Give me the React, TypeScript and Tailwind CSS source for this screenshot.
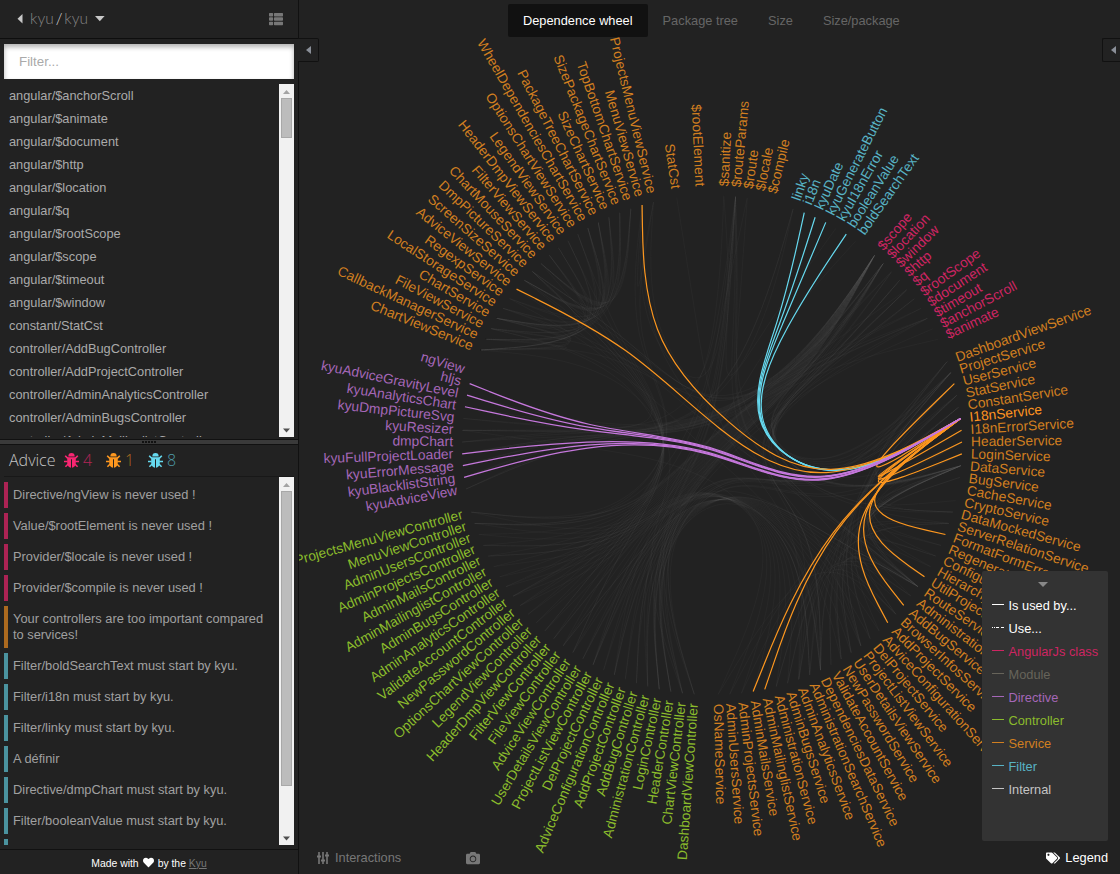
import React from "react";
import { FaCamera, FaHeart, FaTags, FaThList } from "react-icons/fa";

type Kind = "service" | "filter" | "angular" | "controller" | "directive";

const COLORS: Record<Kind, string> = {
  service: "#fd971f",
  filter: "#66d9ef",
  angular: "#f92672",
  controller: "#a6e22e",
  directive: "#c678dd",
};

const LABEL_COLORS: Record<Kind, string> = {
  service: "#d17f20",
  filter: "#58b3c5",
  angular: "#ce2562",
  controller: "#8bbc2c",
  directive: "#a567b8",
};

interface Group {
  kind: Kind;
  names: string[];
}

const GROUPS: Group[] = [
  { kind: "service", names: ["$sanitize", "$routeParams", "$route", "$locale", "$compile"] },
  {
    kind: "filter",
    names: ["linky", "i18n", "kyuDate", "kyuGenerateButton", "kyuI18nError", "booleanValue", "boldSearchText"],
  },
  {
    kind: "angular",
    names: ["$scope", "$location", "$window", "$http", "$q", "$rootScope", "$document", "$timeout", "$anchorScroll", "$animate"],
  },
  {
    kind: "service",
    names: [
      "DashboardViewService", "ProjectService", "UserService", "StatService", "ConstantService", "I18nService",
      "I18nErrorService", "HeaderService", "LoginService", "DataService", "BugService", "CacheService",
      "CryptoService", "DataMockedService", "ServerRelationService", "FormatFormErrorService",
      "RegenerateService", "ConfigurationService", "HierarchyService", "UtilProjectService", "RouteService",
      "AdministrationViewService", "AddBugService", "BrowserInfosService", "AddProjectService",
      "AdviceConfigurationService", "DelProjectService", "ProjectListViewService", "UserDetailsViewService",
      "NewPasswordService", "ValidateAccountService", "DependenciesDataService", "AdministrationSearchService",
      "AdminAnalyticsService", "AdminBugsService", "AdministrationService", "AdminMailinglistService",
      "AdminMailsService", "AdminProjectsService", "AdminUsersService", "OsNameService",
    ],
  },
  {
    kind: "controller",
    names: [
      "DashboardViewController", "ChartViewController", "HeaderController", "LoginController",
      "AdministrationController", "AddBugController", "AddProjectController", "AdviceConfigurationController",
      "DelProjectController", "ProjectListViewController", "UserDetailsViewController", "AdviceViewController",
      "FileViewController", "FilterViewController", "HeaderDmpViewController", "LegendViewController",
      "OptionsChartViewController", "NewPasswordController", "ValidateAccountController",
      "AdminAnalyticsController", "AdminBugsController", "AdminMailinglistController", "AdminMailsController",
      "AdminProjectsController", "AdminUsersController", "MenuViewController", "ProjectsMenuViewController",
    ],
  },
  {
    kind: "directive",
    names: [
      "kyuAdviceView", "kyuBlacklistString", "kyuErrorMessage", "kyuFullProjectLoader", "dmpChart", "kyuResizer",
      "kyuDmpPictureSvg", "kyuAnalyticsChart", "kyuAdviceGravityLevel", "hljs", "ngView",
    ],
  },
  {
    kind: "service",
    names: [
      "ChartViewService", "CallbackManagerService", "FileViewService", "ChartService", "LocalStorageService",
      "RegexpService", "AdviceViewService", "ScreenSizeService", "DmpPictureService", "ChartMouseService",
      "FilterViewService", "HeaderDmpViewService", "LegendViewService", "OptionsChartViewService",
      "WheelDependenciesChartService", "PackageTreeChartService", "SizeChartService",
      "SizePackageChartService", "TopBottomChartService", "MenuViewService", "ProjectsMenuViewService",
    ],
  },
  { kind: "service", names: ["StatCst"] },
  { kind: "service", names: ["$rootElement"] },
];

const CX = 712;
const CY = 445;
const RADIUS = 250;
const TENSION = 0.85;

type Point = [number, number];

interface Leaf {
  name: string;
  kind: Kind;
  group: number;
  slot: number;
  angle: number;
}

const SLOTS = GROUPS.reduce((n, g) => n + g.names.length + 1, 0);
const STEP = 360 / SLOTS;

const leaves: Leaf[] = [];
const groupPoints: Point[] = [];

function polar(angle: number, r: number): Point {
  const a = (angle * Math.PI) / 180;
  return [r * Math.sin(a), -r * Math.cos(a)];
}

let cursor = 1;
GROUPS.forEach((g, gi) => {
  const first = cursor;
  g.names.forEach((name) => {
    leaves.push({ name, kind: g.kind, group: gi, slot: cursor, angle: cursor * STEP });
    cursor += 1;
  });
  groupPoints.push(polar(((first + cursor - 1) / 2) * STEP, RADIUS / 2));
  cursor += 1;
});

const bySlot = new Map<number, Leaf>(leaves.map((l) => [l.slot, l]));

function bundlePath(a: Leaf, b: Leaf): string {
  const start = polar(a.angle, RADIUS);
  const end = polar(b.angle, RADIUS);
  const raw: Point[] =
    a.group === b.group
      ? [start, groupPoints[a.group], end]
      : [start, groupPoints[a.group], [0, 0], groupPoints[b.group], end];
  const n = raw.length - 1;
  const pts = raw.map((p, i): Point => {
    const t = i / n;
    return [
      TENSION * p[0] + (1 - TENSION) * (start[0] + t * (end[0] - start[0])),
      TENSION * p[1] + (1 - TENSION) * (start[1] + t * (end[1] - start[1])),
    ];
  });
  const seq = [pts[0], pts[0], ...pts, pts[n]];
  let d = "M" + start[0].toFixed(2) + "," + start[1].toFixed(2);
  for (let i = 0; i + 3 < seq.length; i++) {
    const [p, q, r, s] = [seq[i], seq[i + 1], seq[i + 2], seq[i + 3]];
    const mix = (k: number) => [
      (2 * q[k] + r[k]) / 3,
      (q[k] + 2 * r[k]) / 3,
      (q[k] + 4 * r[k] + s[k]) / 6,
      (p[k] + 4 * q[k] + r[k]) / 6,
    ];
    const x = mix(0);
    const y = mix(1);
    if (i === 0) d += "L" + x[3].toFixed(2) + "," + y[3].toFixed(2);
    d += `C${x[0].toFixed(2)},${y[0].toFixed(2)} ${x[1].toFixed(2)},${y[1].toFixed(2)} ${x[2].toFixed(2)},${y[2].toFixed(2)}`;
  }
  return d + "L" + end[0].toFixed(2) + "," + end[1].toFixed(2);
}

function range(from: number, to: number): number[] {
  return Array.from({ length: to - from + 1 }, (_, i) => from + i);
}

const mutedLinks: [number, number][] = [];
const connect = (a: number, list: number[]) => list.forEach((b) => mutedLinks.push([a, b]));

// Angular classes
connect(15, [...range(68, 94), 96, 97, 98, 99, 100, 101, 102, 103, 104]);
connect(16, [68, 70, 71, 73, 77, 93, 94, 46, 27, 28, 29, 33, 96, 99]);
connect(17, [35, 49, 115, 101]);
connect(18, [35, 39, 40, 57]);
connect(19, [35, 39, 57, 59, 110]);
connect(20, [35, 46, 71]);
connect(21, [101, 116]);
connect(22, [35, 57, 99, 101, 116]);
connect(23, [70]);
connect(24, [100]);
// Routing and sanitising
connect(1, [7, 100]);
connect(2, [68, 69, 72, 75, 77, 86, 46, 27, 53, 108, 127]);
connect(3, [46, 93]);
connect(7, [96, 97]);
connect(11, [98]);
connect(13, [81]);
// Controllers and their services
connect(26, [68, 46, 35, 27, 53]);
connect(27, [72, 75, 77, 50, 52, 53, 35, 45]);
connect(28, [71, 78, 54, 55, 56]);
connect(29, [69, 57, 35, 46, 59]);
connect(30, [35, 39, 43, 44, 45]);
connect(33, [70, 46]);
connect(34, [71, 46]);
connect(35, [38, 39, 42, 45, 48, 50, 51, 52, 54, 55, 56, 59, 60, 61, 64, 65]);
connect(46, [48, 50, 53, 54, 55, 61, 70, 71, 85]);
connect(40, [42, 45, 57, 58]);
connect(43, [44, 45]);
connect(47, [60, 36]);
connect(49, [36, 58]);
range(0, 8).forEach((i) => mutedLinks.push([72 + i, 47 + i]));
range(0, 8).forEach((i) => mutedLinks.push([86 + i, 57 + i]));
connect(58, [90, 91]);
connect(66, [49, 101]);
connect(57, [69, 80, 110]);
// Chart view services
connect(108, [69, 109, 111, 122, 123, 124, 125, 126]);
connect(109, [111, 116, 118, 120, 121]);
connect(110, [80, 111, 119, 120]);
connect(111, [122, 123, 124, 125, 126, 118]);
connect(112, [35, 108, 121, 119]);
connect(113, [118, 123, 79]);
connect(115, [111, 122, 123, 124, 125, 126]);
connect(116, [122, 102, 82]);
connect(117, [122, 123, 124, 125, 126]);
range(114, 121).forEach((s) => mutedLinks.push([s, s - 35 + (s % 3)]));
connect(127, [93, 46]);
connect(128, [94, 127, 27]);
connect(130, [59]);

const I18N_SLOT = 31;
const activeSlots = [
  8, 9, 10, 12, 28, 32, 33, 34, 41, 45, 48, 50, 62, 63, 114, 127, 97, 98, 99, 103, 104, 105,
];

function DependenceWheel() {
  const source = bySlot.get(I18N_SLOT)!;
  return (
    <svg className="absolute inset-0" width="821" height="874" viewBox="299 0 821 874">
      <g transform={`translate(${CX},${CY})`}>
        <g fill="none" stroke="#666" strokeOpacity="0.09" strokeWidth="1">
          {mutedLinks.map(([a, b], i) => (
            <path key={i} d={bundlePath(bySlot.get(a)!, bySlot.get(b)!)} />
          ))}
        </g>
        <g fill="none" strokeWidth="1.2">
          {activeSlots.map((s) => {
            const leaf = bySlot.get(s)!;
            return <path key={s} d={bundlePath(leaf, source)} stroke={COLORS[leaf.kind]} />;
          })}
        </g>
        <g fontFamily="Liberation Sans, Arial, sans-serif" fontSize="13.8">
          {leaves.map((l) => {
            const flipped = l.angle >= 180;
            return (
              <text
                key={l.slot}
                dy=".31em"
                textAnchor={flipped ? "end" : "start"}
                fill={l.slot === I18N_SLOT ? "#ff9420" : LABEL_COLORS[l.kind]}
                transform={`rotate(${l.angle - 90})translate(${RADIUS + 9},0)${flipped ? "rotate(180)" : ""}`}
              >
                {l.name}
              </text>
            );
          })}
        </g>
      </g>
    </svg>
  );
}

const FILES = [
  "angular/$anchorScroll", "angular/$animate", "angular/$document", "angular/$http", "angular/$location",
  "angular/$q", "angular/$rootScope", "angular/$scope", "angular/$timeout", "angular/$window",
  "constant/StatCst", "controller/AddBugController", "controller/AddProjectController",
  "controller/AdminAnalyticsController", "controller/AdminBugsController", "controller/AdminMailinglistController",
];

const ADVICE: { level: string; text: string }[] = [
  { level: "bg-[#ac2354]", text: "Directive/ngView is never used !" },
  { level: "bg-[#ac2354]", text: "Value/$rootElement is never used !" },
  { level: "bg-[#ac2354]", text: "Provider/$locale is never used !" },
  { level: "bg-[#ac2354]", text: "Provider/$compile is never used !" },
  { level: "bg-[#ac6a1f]", text: "Your controllers are too important compared to services!" },
  { level: "bg-[#4b939f]", text: "Filter/boldSearchText must start by kyu." },
  { level: "bg-[#4b939f]", text: "Filter/i18n must start by kyu." },
  { level: "bg-[#4b939f]", text: "Filter/linky must start by kyu." },
  { level: "bg-[#4b939f]", text: "A définir" },
  { level: "bg-[#4b939f]", text: "Directive/dmpChart must start by kyu." },
  { level: "bg-[#4b939f]", text: "Filter/booleanValue must start by kyu." },
  { level: "bg-[#4b939f]", text: "" },
];

function Scrollbar({ thumb }: { thumb: string }) {
  return (
    <div className="flex w-[15px] shrink-0 flex-col items-center bg-[#f1f1f1]">
      <svg width="15" height="14" className="shrink-0">
        <path d="M4 10h7L7.500 6z" fill="#a3a3a3" />
      </svg>
      <div className={`w-[11px] border border-[#a8a8a8] bg-[#bcbcbc] ${thumb}`} />
      <div className="flex-1" />
      <svg width="15" height="14" className="shrink-0">
        <path d="M4 5.500h7L7.500 9.500z" fill="#505050" />
      </svg>
    </div>
  );
}

function Bug({ className }: { className: string }) {
  return (
    <svg width="15" height="15" viewBox="0 0 15 15" className={className}>
      <path d="M4.300 3.400a3.200 3.400 0 0 1 6.400 0z" fill="currentColor" />
      <path d="M3.200 4.200h8.600v5.300c0 3.200-1.700 5-3.800 5.300V6.200H7v8.600c-2.100-.3-3.800-2.100-3.800-5.300z" fill="currentColor" />
      <path
        d="M3.800 5.400 1.200 2.800M11.200 5.400l2.600-2.600M3.700 8.500H0M11.300 8.500H15M4.200 11l-2.800 2.800M10.800 11l2.800 2.800"
        stroke="currentColor"
        strokeWidth="1.600"
        fill="none"
      />
    </svg>
  );
}

function Sidebar() {
  return (
    <aside className="flex w-[299px] shrink-0 flex-col border-r border-[#111]">
      <header className="flex h-[39px] shrink-0 items-center border-b border-[#0e0e0e] pl-[17px] pr-[15px]">
        <svg width="6" height="10" className="mr-[7px]">
          <path d="M5.500 0v9.600L.5 4.800z" fill="#c8c8c8" />
        </svg>
        <div className="flex w-[58px] items-center justify-between font-['Lato'] text-[15.5px] font-light text-[#858585]">
          <span>kyu</span>
          <span className="text-[#ddd]">/</span>
          <span>kyu</span>
        </div>
        <svg width="10" height="6" className="ml-[7px]">
          <path d="M0 0h9.600L4.800 5.300z" fill="#c8c8c8" />
        </svg>
        <FaThList className="ml-auto text-[#777]" size={14} />
      </header>
      <div className="flex h-[400px] shrink-0 flex-col px-1 pt-[5px]">
        <div className="flex h-[35px] shrink-0 items-center bg-white pl-[15px] text-[13.33px] text-[#aaa] shadow-[inset_0_3px_5px_rgba(0,0,0,0.3)]">
          Filter...
        </div>
        <div className="mt-[5px] flex h-[353px]">
          <ul className="flex-1 overflow-hidden">
            {FILES.map((f) => (
              <li key={f} className="h-[23px] pl-[5px] text-[12.8px] leading-[23px] text-[#aaa]">
                {f}
              </li>
            ))}
          </ul>
          <Scrollbar thumb="h-[40px]" />
        </div>
      </div>
      <div className="flex h-[6px] shrink-0 items-center justify-center gap-[1px] border-y border-[#111] bg-[#3a3a3a]">
        {range(0, 4).map((i) => (
          <span key={i} className="h-[2px] w-[2px] bg-[#111]" />
        ))}
      </div>
      <div className="mx-1 flex h-[32px] shrink-0 items-center border-b border-[#181818] pb-[1px] pl-[5px] font-['Open_Sans'] text-[16px] font-light">
        <span className="w-[55px] text-[#c4c4c4]">Advice</span>
        <Bug className="text-[#f92672]" />
        <span className="ml-[4px] w-[23px] text-[#b02556]">4</span>
        <Bug className="text-[#fd971f]" />
        <span className="ml-[4px] w-[23px] text-[#b06e20]">1</span>
        <Bug className="text-[#66d9ef]" />
        <span className="ml-[4px] text-[#4e9aa8]">8</span>
      </div>
      <div className="mx-1 flex h-[368px] shrink-0">
        <ul className="flex flex-1 flex-col gap-[5px] overflow-hidden pt-[5px]">
          {ADVICE.map((a, i) => (
            <li key={i} className="flex min-h-[26px] shrink-0">
              <span className={`w-[4px] shrink-0 ${a.level}`} />
              <span className="py-[5px] pr-[8px] pl-[5px] text-[12.85px] leading-[16px] text-[#a0a0a0]">{a.text}</span>
            </li>
          ))}
        </ul>
        <Scrollbar thumb="h-[295px]" />
      </div>
      <footer className="mt-[4px] flex flex-1 items-center justify-center border-t border-[#111] pt-[3px] text-[10.4px] text-white">
        Made with
        <FaHeart size={11} className="mx-[4px] mb-[2px]" />
        by the&nbsp;<span className="text-[#777] underline">Kyu</span>
      </footer>
    </aside>
  );
}

const TABS = ["Dependence wheel", "Package tree", "Size", "Size/package"];

const LEGEND = [
  { label: "Is used by...", color: "text-white", dashed: false },
  { label: "Use...", color: "text-white", dashed: true },
  { label: "AngularJs class", color: "text-[#ce2562]", dashed: false },
  { label: "Module", color: "text-[#67645a]", dashed: false },
  { label: "Directive", color: "text-[#a567b8]", dashed: false },
  { label: "Controller", color: "text-[#8bbc2c]", dashed: false },
  { label: "Service", color: "text-[#d17f20]", dashed: false },
  { label: "Filter", color: "text-[#58b3c5]", dashed: false },
  { label: "Internal", color: "text-[#c4c4c4]", dashed: false },
];

function Legend() {
  return (
    <div className="h-[270px] w-[126px] rounded-[2px] bg-[#333] px-[10px] pt-[11px]">
      <svg width="10" height="5" className="ml-[46px]">
        <path d="M0 0h10L5 5z" fill="#888" />
      </svg>
      <ul className="mt-[7px]">
        {LEGEND.map((l) => (
          <li key={l.label} className={`flex h-[23px] items-center whitespace-nowrap text-[12.8px] ${l.color}`}>
            <svg width="12" height="1" className="mr-[4.500px] -mt-[3px] shrink-0">
              <path d="M0 .5h12" stroke="currentColor" strokeDasharray={l.dashed ? "1 1 1 1 3 2 3 0" : undefined} />
            </svg>
            {l.label}
          </li>
        ))}
      </ul>
    </div>
  );
}

function CollapseArrow() {
  return (
    <svg width="5" height="8">
      <path d="M5 0v8L0 4z" fill="#8a8f98" />
    </svg>
  );
}

export default function App() {
  return (
    <div className="flex h-[874px] w-[1120px] overflow-hidden bg-[#222] font-['Liberation_Sans',Arial,sans-serif]">
      <Sidebar />
      <main className="relative flex flex-1 flex-col">
        <DependenceWheel />
        <nav className="relative ml-[209px] mt-[4px] flex h-[33px] text-[12.8px]">
          {TABS.map((t, i) => (
            <span
              key={t}
              className={
                i === 0
                  ? "flex items-center rounded-[2px] bg-[#111] px-[15px] text-white"
                  : "flex items-center px-[15px] text-[#666]"
              }
            >
              {t}
            </span>
          ))}
        </nav>
        <div className="relative mt-[1px] flex justify-between">
          <div className="-ml-[1px] flex h-[24px] w-[21px] items-center justify-center rounded-r-[2px] border border-l-0 border-[#111] bg-[#222]">
            <CollapseArrow />
          </div>
          <div className="flex h-[24px] w-[18px] items-center justify-end rounded-l-[2px] border border-r-0 border-[#111] bg-[#222] pr-[4px]">
            <CollapseArrow />
          </div>
        </div>
        <div className="relative mr-[12px] mt-auto flex justify-end">
          <Legend />
        </div>
        <div className="relative flex h-[33px] shrink-0 items-center pl-[18px] pr-[12px] text-[12.8px] text-[#777]">
          <svg width="12" height="12" viewBox="0 0 12 12" className="mr-[6px]" stroke="currentColor" fill="none">
            <path d="M2 0v12M6 0v12M10 0v12" strokeWidth="1.600" />
            <path d="M0 4.500h4M4 8.500h4M8 3.500h4" strokeWidth="2.200" />
          </svg>
          Interactions
          <FaCamera size={14} className="ml-[65px]" />
          <span className="ml-auto flex items-center gap-[5px] text-white">
            <FaTags size={14} />
            Legend
          </span>
        </div>
      </main>
    </div>
  );
}
